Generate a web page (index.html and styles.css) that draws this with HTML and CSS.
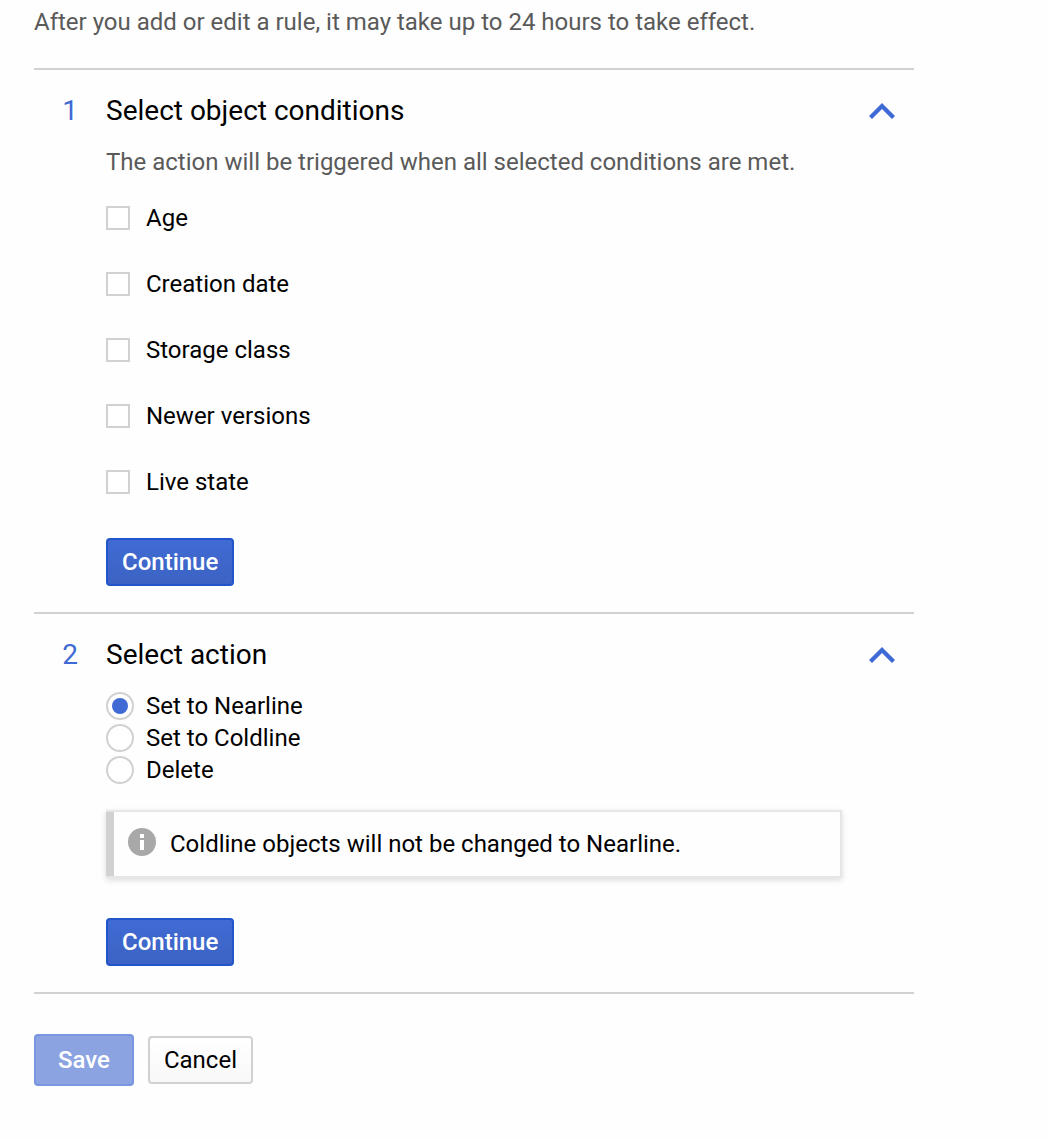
FILE: index.html
```
<!DOCTYPE html>
<html lang="en">
<head>
  <meta charset="UTF-8" />
  <meta name="viewport" content="width=device-width, initial-scale=1.0" />
  <title>Add object lifecycle rule</title>
  <link rel="stylesheet" href="styles.css">
</head>
<body>
  <form class="rule-form">
    <p class="intro">After you add or edit a rule, it may take up to 24 hours to take effect.</p>

    <section class="step">
      <span class="step-number">1</span>
      <h2 class="step-title">Select object conditions</h2>
      <button class="step-toggle" type="button" aria-label="Collapse object conditions">
        <svg class="chevron" viewBox="0 0 26 16"><path d="M13 0L26 13L23 16L13 6L3 16L0 13Z" /></svg>
      </button>
      <div class="step-body">
        <p class="hint">The action will be triggered when all selected conditions are met.</p>
        <div class="conditions">
          <label class="option"><input class="checkbox" type="checkbox" name="age" />Age</label>
          <label class="option"><input class="checkbox" type="checkbox" name="created" />Creation date</label>
          <label class="option"><input class="checkbox" type="checkbox" name="class" />Storage class</label>
          <label class="option"><input class="checkbox" type="checkbox" name="newer" />Newer versions</label>
          <label class="option"><input class="checkbox" type="checkbox" name="live" />Live state</label>
        </div>
        <button class="btn btn-primary" type="button">Continue</button>
      </div>
    </section>

    <section class="step">
      <span class="step-number">2</span>
      <h2 class="step-title">Select action</h2>
      <button class="step-toggle" type="button" aria-label="Collapse action">
        <svg class="chevron" viewBox="0 0 26 16"><path d="M13 0L26 13L23 16L13 6L3 16L0 13Z" /></svg>
      </button>
      <div class="step-body">
        <div class="actions">
          <label class="option"><input class="radio" type="radio" name="action" value="nearline" checked />Set to Nearline</label>
          <label class="option"><input class="radio" type="radio" name="action" value="coldline" />Set to Coldline</label>
          <label class="option"><input class="radio" type="radio" name="action" value="delete" />Delete</label>
        </div>
        <div class="notice">
          <svg class="info-icon" viewBox="0 0 28 28">
            <circle cx="14" cy="14" r="14" />
            <rect x="12" y="6" width="4" height="4" />
            <rect x="12" y="12" width="4" height="10" />
          </svg>
          <p>Coldline objects will not be changed to Nearline.</p>
        </div>
        <button class="btn btn-primary" type="button">Continue</button>
      </div>
    </section>

    <div class="form-footer">
      <button class="btn btn-primary btn-save" type="submit" disabled>Save</button>
      <button class="btn btn-default" type="button">Cancel</button>
    </div>
  </form>
</body>
</html>
```
FILE: styles.css
```
:root {
  --blue: #3f69d4;
  --blue-dark: #2254cc;
  --line: #d1d1d1;
  --muted: #5a5a5a;
}
* {
  margin: 0;
  padding: 0;
  box-sizing: border-box;
}
body {
  padding: 6px 34px 54px;
  background-color: #fefefe;
  color: #000;
  font-family: Roboto, sans-serif;
  font-size: 24px;
  line-height: 32px;
}
.rule-form {
  max-width: 880px;
}
.intro {
  margin-bottom: 30px;
  color: var(--muted);
}

/* Steps */
.step {
  display: grid;
  grid-template-columns: 72px 1fr 72px;
  row-gap: 17px;
  padding: 23px 0 26px;
  border-top: 2px solid var(--line);
}
.step-number {
  color: var(--blue);
  font-size: 28px;
  line-height: 36px;
  text-align: center;
}
.step-title {
  font-size: 28px;
  font-weight: 400;
  line-height: 36px;
}
.step-toggle {
  display: flex;
  align-items: center;
  justify-content: center;
  justify-self: end;
  width: 64px;
  border: none;
  background: none;
  cursor: pointer;
}
.chevron {
  width: 26px;
  height: 16px;
  fill: var(--blue);
}
.step-body {
  grid-column: 2;
}
.hint {
  margin-bottom: 24px;
  color: var(--muted);
}

/* Options */
.conditions {
  display: flex;
  flex-direction: column;
  align-items: flex-start;
  gap: 34px;
  margin-bottom: 40px;
}
.actions {
  display: flex;
  flex-direction: column;
  align-items: flex-start;
  margin-bottom: 24px;
}
.option {
  display: flex;
  align-items: center;
  cursor: pointer;
}
.checkbox,
.radio {
  appearance: none;
  border: 2px solid var(--line);
  background-color: #fff;
}
.checkbox {
  width: 24px;
  height: 24px;
  margin-right: 16px;
}
.checkbox:checked {
  border-color: var(--blue);
  background-color: var(--blue);
}
.radio {
  width: 28px;
  height: 28px;
  margin-right: 12px;
  border-radius: 50%;
}
.radio:checked {
  padding: 4px;
  background-color: var(--blue);
  background-clip: content-box;
}

/* Notice */
.notice {
  display: flex;
  gap: 14px;
  margin-bottom: 40px;
  padding: 16px 14px 16px 22px;
  border: 2px solid #e6e6e6;
  border-left: none;
  box-shadow: inset 8px 0 var(--line), 0 2px 6px rgba(0, 0, 0, 0.14);
}
.info-icon {
  flex: none;
  width: 28px;
  height: 28px;
  fill: #fff;
}
.info-icon circle {
  fill: #a8a8a8;
}

/* Buttons */
.btn {
  height: 48px;
  padding: 0 14px;
  border: 2px solid var(--line);
  border-radius: 4px;
  font: inherit;
  cursor: pointer;
}
.btn-primary {
  border-color: var(--blue-dark);
  background: linear-gradient(#416bd4, #3c63c4);
  color: #fff;
  font-weight: 500;
}
.btn-default {
  background: linear-gradient(#fff, #f8f8f8);
  color: #000;
}
.btn-save {
  height: 52px;
  padding: 0 22px;
}
.btn:disabled {
  border-color: #7897e0;
  background: #8ca3e2;
  cursor: default;
}
.form-footer {
  display: flex;
  align-items: center;
  gap: 14px;
  padding-top: 40px;
  border-top: 2px solid var(--line);
}
```
